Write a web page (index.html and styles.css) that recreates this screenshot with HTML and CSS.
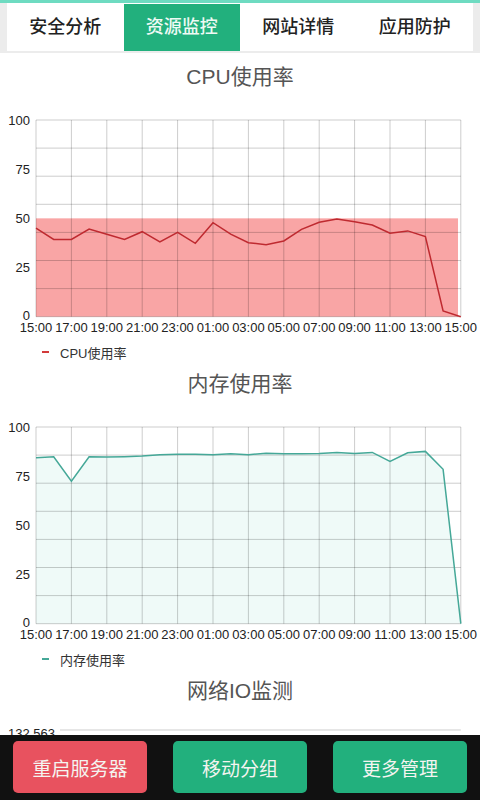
FILE: index.html
```html
<!DOCTYPE html>
<html>

<head>
    <title>资源监控</title>
    <meta name="viewport" content="width=device-width, initial-scale=1" charset="UTF-8">
    <link rel="stylesheet" href="styles.css">
</head>

<body>
    <!-- 顶部选项卡 -->
    <div class="tabs">
        <div class="tab-list">
            <div class="tab">安全分析</div>
            <div class="tab active">资源监控</div>
            <div class="tab">网站详情</div>
            <div class="tab">应用防护</div>
        </div>
    </div>

    <!-- CPU -->
    <div class="chart-box">
        <p class="chart-title">CPU使用率</p>
        <svg class="chart" id="cpuChart" width="480" height="248"></svg>
        <p class="legend"><span class="legend-line cpu"></span>CPU使用率</p>
    </div>

    <!-- 内存 -->
    <div class="chart-box">
        <p class="chart-title">内存使用率</p>
        <svg class="chart" id="memChart" width="480" height="248"></svg>
        <p class="legend"><span class="legend-line mem"></span>内存使用率</p>
    </div>

    <!-- 网络IO -->
    <div class="chart-box">
        <p class="chart-title">网络IO监测</p>
        <svg class="chart" id="netChart" width="480" height="60"></svg>
    </div>

    <!-- 底部操作按钮 -->
    <div class="bottom-bar">
        <a class="btn btn-red">重启服务器</a>
        <a class="btn">移动分组</a>
        <a class="btn">更多管理</a>
    </div>

    <script>
        (function () {
            var NS = "http://www.w3.org/2000/svg";
            var plotLeft = 36, plotRight = 460.8, plotTop = 28, plotBottom = 224.7, step = 17.7;
            var hours = ["15:00", "17:00", "19:00", "21:00", "23:00", "01:00", "03:00",
                "05:00", "07:00", "09:00", "11:00", "13:00", "15:00"];

            // 每小时一个点
            var cpuData = [45, 39.3, 39.3, 44.6, 41.9, 39.3, 43.2, 38.1, 42.9, 37.3, 47.8, 42,
                37.6, 36.6, 38.5, 44.4, 48, 49.7, 48.3, 46.6, 42.4, 43.6, 40.7, 2.9, 0];
            var memData = [84.4, 84.9, 72.5, 84.9, 84.7, 84.9, 85.2, 85.9, 86.1, 86.1, 85.9, 86.4,
                85.9, 86.7, 86.4, 86.4, 86.6, 87.1, 86.6, 87.1, 82.5, 86.9, 87.6, 78.5, 0];

            function add(svg, tag, attrs, text) {
                var el = document.createElementNS(NS, tag);
                for (var k in attrs) {
                    el.setAttribute(k, attrs[k]);
                }
                if (text) el.textContent = text;
                svg.appendChild(el);
                return el;
            }

            function yOf(v) {
                return plotBottom - v * (plotBottom - plotTop) / 100;
            }

            function points(data) {
                return data.map(function (v, i) {
                    return (plotLeft + i * step).toFixed(1) + "," + yOf(v).toFixed(1);
                }).join(" ");
            }

            // 网格和坐标轴文字
            function drawGrid(svg) {
                for (var i = 0; i < 8; i++) {
                    var y = plotTop + i * (plotBottom - plotTop) / 7;
                    add(svg, "line", { x1: plotLeft, x2: plotRight, y1: y, y2: y, "class": "grid" });
                }
                for (var k = 0; k < hours.length; k++) {
                    var x = plotLeft + k * step * 2;
                    add(svg, "line", { x1: x, x2: x, y1: plotTop, y2: plotBottom, "class": "grid" });
                    add(svg, "text", { x: x, y: 239.5, "text-anchor": "middle", "class": "axis" }, hours[k]);
                }
                [100, 75, 50, 25, 0].forEach(function (v) {
                    var dy = v === 0 ? 3 : 4.6;
                    add(svg, "text", { x: 30, y: yOf(v) + dy, "text-anchor": "end", "class": "axis" }, String(v));
                });
            }

            var cpu = document.getElementById("cpuChart");
            add(cpu, "rect", { x: plotLeft, y: yOf(50), width: 458 - plotLeft, height: plotBottom - yOf(50), "class": "cpu-fill" });
            drawGrid(cpu);
            add(cpu, "polyline", { points: points(cpuData), "class": "cpu-line" });

            var mem = document.getElementById("memChart");
            add(mem, "polygon", {
                points: plotLeft + "," + plotBottom + " " + points(memData) + " " + plotRight + "," + plotBottom,
                "class": "mem-fill"
            });
            drawGrid(mem);
            add(mem, "polyline", { points: points(memData), "class": "mem-line" });

            var net = document.getElementById("netChart");
            add(net, "line", { x1: 60, x2: plotRight, y1: 24, y2: 24, "class": "grid" });
            add(net, "text", { x: 8, y: 32, "class": "axis" }, "132.563");
        })();
    </script>

</body>

</html>
```

FILE: styles.css
```css
body {
    margin: 0;
    background-color: #ffffff;
    font-family: "Liberation Sans", "Noto Sans CJK SC", sans-serif;
}

.tabs {
    border-top: 3px solid #6edbc1;
    background-color: #ececec;
    padding: 0 7px 2px;
    margin-bottom: 9px;
}

.tab-list {
    display: flex;
    background-color: #ffffff;
    padding-top: 1px;
}

.tab {
    flex: 1;
    height: 47px;
    line-height: 47px;
    text-align: center;
    font-size: 18px;
    font-weight: 500;
    color: #222222;
}

.tab.active {
    background-color: #22b07d;
    color: #eefaf4;
}

.chart-box {
    margin-bottom: 5px;
}

.chart-title {
    margin: 0;
    height: 30px;
    line-height: 30px;
    text-align: center;
    font-size: 21px;
    color: #555555;
}

.chart {
    display: block;
}

.grid {
    stroke: rgba(0, 0, 0, 0.2);
    stroke-width: 1;
}

.axis {
    font-size: 13px;
    fill: #222222;
}

.cpu-fill {
    fill: #f9a5a5;
}

.cpu-line {
    fill: none;
    stroke: #bf2a30;
    stroke-width: 1.5;
}

.mem-fill {
    fill: #effaf8;
}

.mem-line {
    fill: none;
    stroke: #45a898;
    stroke-width: 1.5;
}

.legend {
    margin: 0;
    height: 24px;
    display: flex;
    align-items: center;
    padding-left: 42px;
    font-size: 13px;
    color: #333333;
}

.legend-line {
    width: 7px;
    height: 2px;
    margin-right: 11px;
}

.legend-line.cpu {
    background-color: #d23a3a;
}

.legend-line.mem {
    background-color: #45a898;
}

.bottom-bar {
    position: fixed;
    left: 0;
    right: 0;
    bottom: 0;
    height: 65px;
    box-sizing: border-box;
    padding: 6px 13px 7px;
    display: flex;
    gap: 26px;
    background-color: #111111;
}

.btn {
    flex: 1;
    display: flex;
    align-items: center;
    justify-content: center;
    border-radius: 5px;
    background-color: #22b07d;
    color: #f4f4f0;
    font-size: 19px;
}

.btn-red {
    background-color: #e8525f;
}
```
